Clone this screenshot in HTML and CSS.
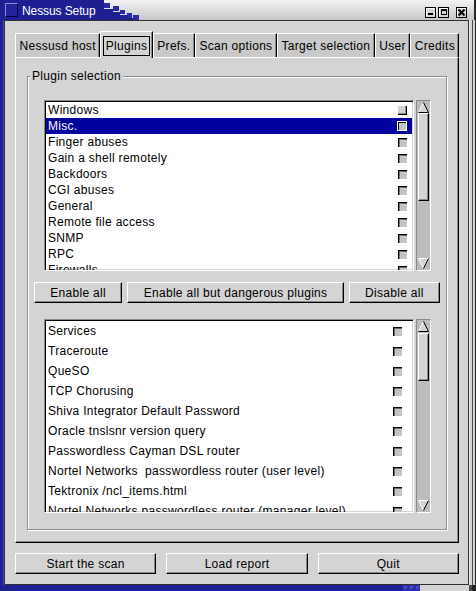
FILE: index.html
```html
<!DOCTYPE html>
<html>
<head>
<meta charset="utf-8">
<title>Nessus Setup</title>
<link rel="stylesheet" href="styles.css">
</head>
<body>
<div class="win">
  <div class="titlebar">
    <span class="ticon"></span>
    <span class="ttext">Nessus Setup</span>
    <div class="tbtns">
      <svg class="tb" width="11" height="11" viewBox="0 0 11 11"><rect x="0.5" y="0.5" width="10" height="10" fill="#d4d4d4" stroke="#000"/><path d="M1.5 9.5V1.5H9.5" stroke="#fff" fill="none"/><rect x="3" y="6" width="5" height="2" fill="#000"/></svg>
      <svg class="tb" width="11" height="11" viewBox="0 0 11 11"><rect x="0.5" y="0.5" width="10" height="10" fill="#d4d4d4" stroke="#000"/><path d="M1.5 9.5V1.5H9.5" stroke="#fff" fill="none"/><path d="M3 2h6v6H3z M4 4h4v3H4z" fill="#000" fill-rule="evenodd"/></svg>
      <svg class="tb tb-close" width="11" height="11" viewBox="0 0 11 11"><rect x="0.5" y="0.5" width="10" height="10" fill="#d4d4d4" stroke="#000"/><path d="M1.5 9.5V1.5H9.5" stroke="#fff" fill="none"/><path d="M2.5 2.5l6 6M8.5 2.5l-6 6" stroke="#000" stroke-width="2"/></svg>
    </div>
  </div>
  <div class="frame">
    <div class="lborder"></div>
    <div class="client">
      <div class="notebook">
        <div class="tabs">
          <div class="tab">Nessusd host</div>
          <div class="tab active"><span class="focus">Plugins</span></div>
          <div class="tab">Prefs.</div>
          <div class="tab">Scan options</div>
          <div class="tab">Target selection</div>
          <div class="tab">User</div>
          <div class="tab">Credits</div>
        </div>
        <div class="page">
          <div class="group">
            <span class="group-label">Plugin selection</span>
            <div class="listwrap list-a">
              <div class="list">
                <div class="row"><span class="txt">Windows</span><span class="cb raised"></span></div>
                <div class="row sel"><span class="txt">Misc.</span><span class="cb selcb"></span></div>
                <div class="row"><span class="txt">Finger abuses</span><span class="cb"></span></div>
                <div class="row"><span class="txt">Gain a shell remotely</span><span class="cb"></span></div>
                <div class="row"><span class="txt">Backdoors</span><span class="cb"></span></div>
                <div class="row"><span class="txt">CGI abuses</span><span class="cb"></span></div>
                <div class="row"><span class="txt">General</span><span class="cb"></span></div>
                <div class="row"><span class="txt">Remote file access</span><span class="cb"></span></div>
                <div class="row"><span class="txt">SNMP</span><span class="cb"></span></div>
                <div class="row"><span class="txt">RPC</span><span class="cb"></span></div>
                <div class="row"><span class="txt">Firewalls</span><span class="cb"></span></div>
              </div>
              <div class="sb">
                <svg class="arrow" width="11" height="11" viewBox="0 0 11 11"><path d="M5.5 0.5L10.5 10.5H0.5Z" fill="#d4d4d4"/><path d="M0.5 10.5L5.5 0.5" stroke="#fff" fill="none"/><path d="M5.5 0.5L10.5 10.5H0.5" stroke="#000" fill="none"/></svg>
                <div class="track"><div class="thumb thumb-a"></div></div>
                <svg class="arrow" width="11" height="11" viewBox="0 0 11 11"><path d="M0.5 0.5H10.5L5.5 10.5Z" fill="#d4d4d4"/><path d="M5.5 10.5L0.5 0.5H10.5" stroke="#fff" fill="none"/><path d="M10.5 0.5L5.5 10.5" stroke="#000" fill="none"/></svg>
              </div>
            </div>
            <div class="btnrow">
              <button class="btn">Enable all</button>
              <button class="btn">Enable all but dangerous plugins</button>
              <button class="btn">Disable all</button>
            </div>
            <div class="listwrap list-b">
              <div class="list">
                <div class="row"><span class="txt">Services</span><span class="cb"></span></div>
                <div class="row"><span class="txt">Traceroute</span><span class="cb"></span></div>
                <div class="row"><span class="txt">QueSO</span><span class="cb"></span></div>
                <div class="row"><span class="txt">TCP Chorusing</span><span class="cb"></span></div>
                <div class="row"><span class="txt">Shiva Integrator Default Password</span><span class="cb"></span></div>
                <div class="row"><span class="txt">Oracle tnslsnr version query</span><span class="cb"></span></div>
                <div class="row"><span class="txt">Passwordless Cayman DSL router</span><span class="cb"></span></div>
                <div class="row"><span class="txt">Nortel Networks  passwordless router (user level)</span><span class="cb"></span></div>
                <div class="row"><span class="txt">Tektronix /ncl_items.html</span><span class="cb"></span></div>
                <div class="row"><span class="txt">Nortel Networks passwordless router (manager level)</span><span class="cb"></span></div>
              </div>
              <div class="sb">
                <svg class="arrow" width="11" height="11" viewBox="0 0 11 11"><path d="M5.5 0.5L10.5 10.5H0.5Z" fill="#d4d4d4"/><path d="M0.5 10.5L5.5 0.5" stroke="#fff" fill="none"/><path d="M5.5 0.5L10.5 10.5H0.5" stroke="#000" fill="none"/></svg>
                <div class="track"><div class="thumb thumb-b"></div></div>
                <svg class="arrow" width="11" height="11" viewBox="0 0 11 11"><path d="M0.5 0.5H10.5L5.5 10.5Z" fill="#d4d4d4"/><path d="M5.5 10.5L0.5 0.5H10.5" stroke="#fff" fill="none"/><path d="M10.5 0.5L5.5 10.5" stroke="#000" fill="none"/></svg>
              </div>
            </div>
          </div>
        </div>
      </div>
      <div class="actions">
        <button class="btn">Start the scan</button>
        <button class="btn">Load report</button>
        <button class="btn">Quit</button>
      </div>
    </div>
    <div class="rborder"></div>
  </div>
  <div class="bborder"></div>
</div>
</body>
</html>
```

FILE: styles.css
```css
* { box-sizing: border-box; }
html, body { margin: 0; padding: 0; }
body {
  font-family: "Liberation Sans", Arial, sans-serif;
  font-size: 12px;
  letter-spacing: 0.3px;
  color: #000;
  background: #d4d4d4;
}

.win {
  width: 476px;
  height: 591px;
  display: flex;
  flex-direction: column;
  background: #d4d4d4;
  overflow: hidden;
}

/* ---------- title bar ---------- */
.titlebar {
  height: 20px;
  flex: none;
  display: flex;
  align-items: flex-start;
  border-right: 2px solid #2a2a2a;
  background:
    linear-gradient(#1f1f94, #1f1f94) 0 0 / 104px 20px no-repeat,
    linear-gradient(#2a2aa8, #2a2aa8) 104px 3px / 6px 5px no-repeat,
    linear-gradient(#1f1f94, #1f1f94) 104px 9px / 9px 11px no-repeat,
    linear-gradient(#2a2aa8, #2a2aa8) 113px 6px / 6px 5px no-repeat,
    linear-gradient(#1f1f94, #1f1f94) 113px 12px / 7px 8px no-repeat,
    linear-gradient(#2a2aa8, #2a2aa8) 120px 10px / 5px 4px no-repeat,
    linear-gradient(#1f1f94, #1f1f94) 120px 15px / 7px 5px no-repeat,
    linear-gradient(#2a2aa8, #2a2aa8) 127px 13px / 5px 5px no-repeat,
    linear-gradient(#1f1f94, #1f1f94) 127px 18px / 6px 2px no-repeat,
    linear-gradient(#2a2aa8, #2a2aa8) 133px 15px / 6px 5px no-repeat,
    linear-gradient(to bottom, #f2f2f2 0, #e2e2e2 40%, #c6c6c6 100%);
}
.ticon {
  width: 13px;
  height: 14px;
  margin: 3px 0 0 5px;
  background: #23239c;
  border: 1px solid;
  border-color: #8a8ad8 #00003c #00003c #8a8ad8;
  flex: none;
}
.ttext {
  color: #fff;
  margin: 1px 0 0 4px;
  line-height: 20px;
  font-size: 12px;
  letter-spacing: -0.1px;
}
.tbtns {
  margin-left: auto;
  margin-top: 7px;
  margin-right: 7px;
  display: flex;
  gap: 2px;
}
.tb { display: block; }
.tb-close { margin-left: 5px; }

/* ---------- frame ---------- */
.frame {
  flex: none;
  height: 565px;
  display: flex;
}
.lborder {
  width: 4px;
  background: #1f1f94;
  box-shadow: inset -1px 0 0 #4646b8;
}
.client {
  width: 465px;
  border: 1px solid #303030;
  padding: 10px 9px 10px 10px;
  display: flex;
  flex-direction: column;
  background: #d4d4d4;
}
.rborder {
  flex: 1;
  background: linear-gradient(to right, #ececec 0 1px, #d4d4d4 1px 3px, #4a4a4a 3px 4px, #d4d4d4 4px 6px, #222 6px 7px);
}
.bborder {
  flex: none;
  height: 6px;
  background:
    linear-gradient(#4a4ad0, #4a4ad0) 404px 1px / 3px 3px no-repeat,
    linear-gradient(#4a4ad0, #4a4ad0) 410px 1px / 3px 3px no-repeat,
    linear-gradient(#4a4ad0, #4a4ad0) 416px 1px / 3px 3px no-repeat,
    linear-gradient(to right, #1f1f94 0 402px, #2d2da8 402px 420px, #d4d4d4 420px 469px, #4a4a4a 469px 472px, #222 472px);
}

/* ---------- notebook ---------- */
.notebook {
  display: flex;
  flex-direction: column;
}
.tabs {
  height: 26px;
  display: flex;
  align-items: flex-end;
}
.tab {
  height: 24px;
  padding: 1px 3.5px 0;
  line-height: 22px;
  white-space: nowrap;
  background: #c9c9c9;
  border-top: 1px solid #fff;
  border-left: 1px solid #fff;
  border-right: 1px solid #000;
  box-shadow: inset -1px 0 0 #8a8a8a;
}
.tab.active {
  position: relative;
  z-index: 1;
  height: 27px;
  margin-bottom: -1px;
  padding: 4px 1.5px 0;
  background: #d4d4d4;
}
.focus {
  display: block;
  height: 20px;
  line-height: 18px;
  padding: 0 2px;
  border: 1px solid #000;
}
.page {
  height: 486px;
  background: #d4d4d4;
  border-top: 1px solid #fff;
  border-left: 1px solid #fff;
  border-right: 1px solid #000;
  border-bottom: 1px solid #000;
  box-shadow: inset -1px -1px 0 #8a8a8a;
  padding: 18px 11px 12px 11px;
}

/* ---------- frame group ---------- */
.group {
  position: relative;
  height: 454px;
  border: 1px solid #8c8c8c;
  box-shadow: inset 1px 1px 0 #fff, 1px 1px 0 #fff;
  padding: 23px 6px 16px 6px;
  display: flex;
  flex-direction: column;
}
.group-label {
  position: absolute;
  top: -8px;
  left: 2px;
  padding: 0 2px;
  line-height: 14px;
  background: #d4d4d4;
}

/* ---------- lists ---------- */
.listwrap {
  display: flex;
  gap: 2px;
  margin: 0 9px 0 10px;
}
.list-a { height: 171px; }
.list-b { height: 194px; margin-top: 16px; }
.list {
  flex: 1;
  background: #fff;
  border: 1px solid;
  border-color: #8a8a8a #fff #fff #8a8a8a;
  box-shadow: inset 1px 1px 0 #000, inset -1px -1px 0 #d4d4d4;
  padding: 1px;
  overflow: hidden;
}
.row {
  display: flex;
  align-items: center;
  justify-content: space-between;
  white-space: pre;
}
.list-a .row {
  height: 16px;
  padding: 0 5px 0 2px;
}
.list-b .row {
  height: 20px;
  padding: 0 10px 0 2px;
}
.row.sel {
  background: #00009c;
  color: #fff;
}
.cb {
  flex: none;
  width: 9px;
  height: 9px;
  background: #c4c4c4;
  border-top: 1px solid #000;
  border-left: 1px solid #000;
  box-shadow: inset 1px 1px 0 #6a6a6a;
}
.cb.raised {
  background: #d4d4d4;
  border: none;
  border-right: 1px solid #000;
  border-bottom: 1px solid #000;
  box-shadow: inset -1px -1px 0 #8a8a8a;
}
.cb.selcb {
  width: 10px;
  height: 10px;
  border: 1px solid #fff;
  box-shadow: inset 1px 1px 0 #000;
}

/* ---------- scrollbars ---------- */
.sb {
  flex: none;
  width: 15px;
  display: flex;
  flex-direction: column;
  padding: 1px;
  background: #bcbcbc;
  border: 1px solid;
  border-color: #8a8a8a #fff #fff #8a8a8a;
}
.arrow { display: block; flex: none; }
.track { flex: 1; }
.thumb {
  background: #d4d4d4;
  border: 1px solid;
  border-color: #fff #000 #000 #fff;
  box-shadow: inset -1px -1px 0 #8a8a8a;
}
.thumb-a { height: 88px; }
.thumb-b { height: 48px; margin-top: 1px; }

/* ---------- buttons ---------- */
.btn {
  font-family: inherit;
  font-size: 12px;
  letter-spacing: 0.3px;
  color: #000;
  margin: 0;
  height: 21px;
  line-height: 18px;
  padding: 0 6px;
  background: #d4d4d4;
  border: 1px solid;
  border-color: #fff #000 #000 #fff;
  box-shadow: inset -1px -1px 0 #8a8a8a;
  border-radius: 0;
  text-align: center;
  white-space: nowrap;
}
.btnrow {
  display: flex;
  gap: 5px;
  height: 21px;
  margin-top: 11px;
}
.btnrow .btn { flex: 1 1 auto; }
.actions {
  display: flex;
  gap: 10px;
  margin-top: 10px;
  height: 21px;
}
.actions .btn { flex: 1 1 0; }
```
